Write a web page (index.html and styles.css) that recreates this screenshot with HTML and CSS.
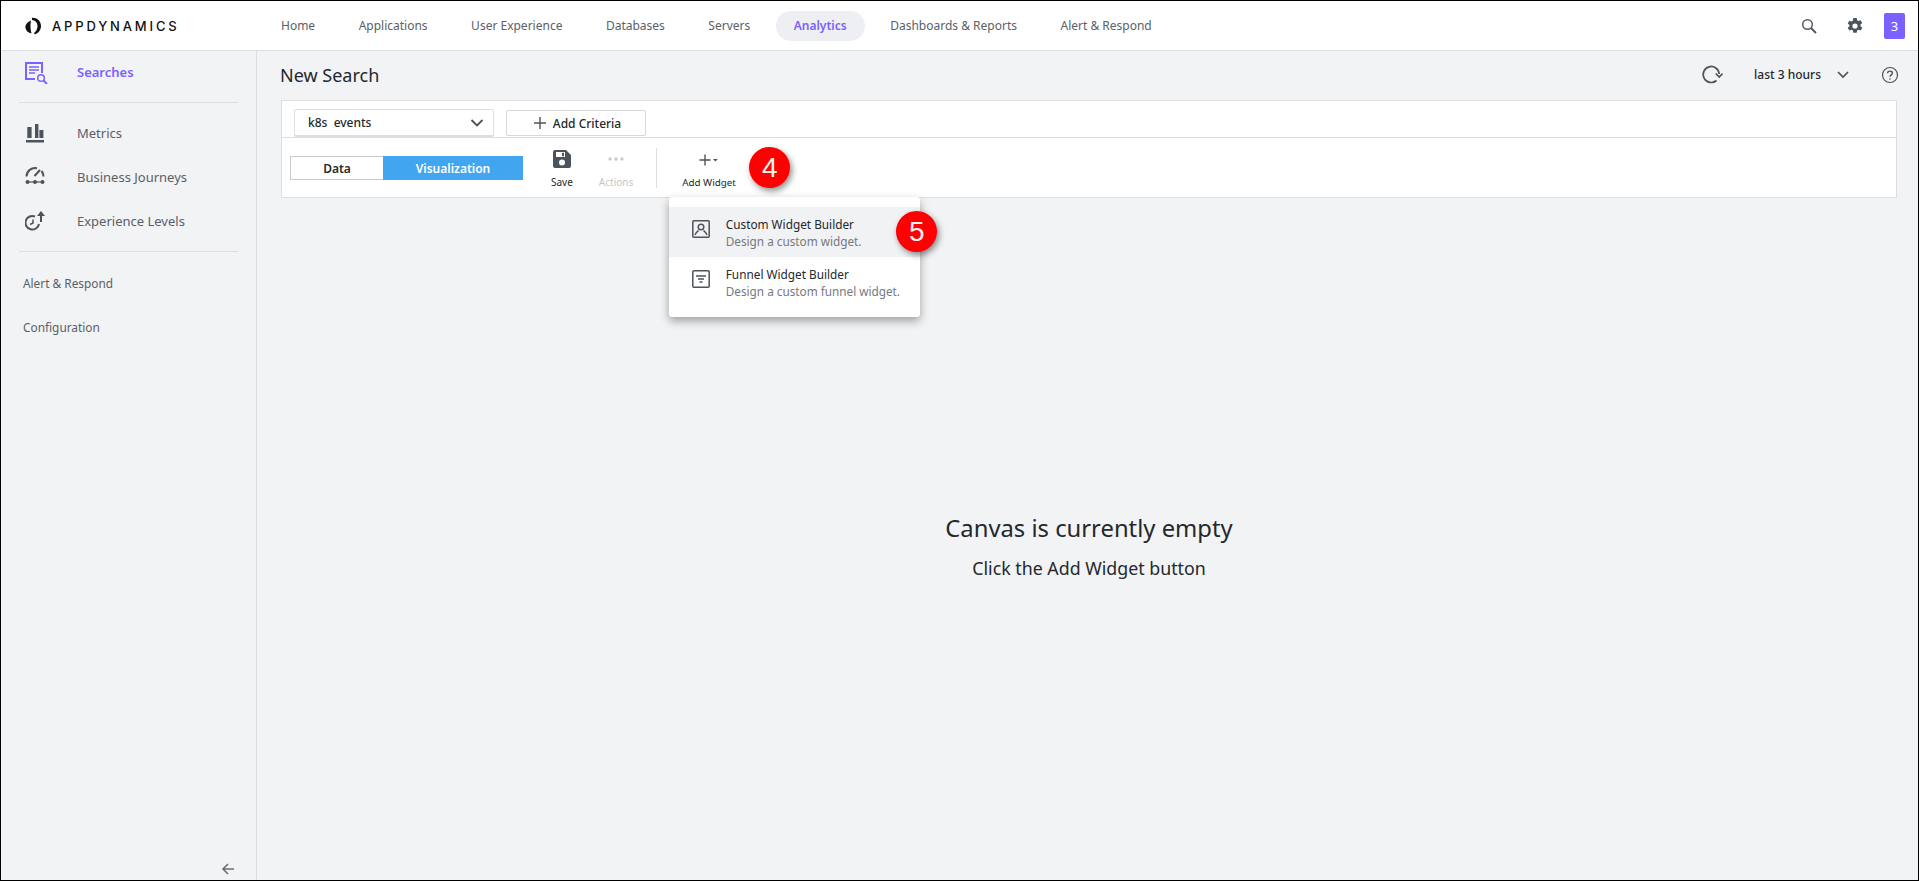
FILE: index.html
```html
<!DOCTYPE html>
<html lang="en">
<head>
    <meta charset="UTF-8">
    <title>New Search</title>
    <link rel="stylesheet" href="styles.css">
</head>
<body>
<div class="frame">
    <header class="topbar">
        <div class="logo">
            <svg width="16" height="18" viewBox="0 0 16 18" fill="#111"><path d="M6 3.500C2 5 0 8 .5 11c.5 3 3 5 6 5.500C5.500 13 5 8 6 3.500z"/><path d="M7 .8c5-.3 9 3.200 9 8.200 0 4-2.500 7-6 8.500L9 16c2.500-2 3.500-4.500 3.500-7 0-3-2-5.500-5.500-6z"/></svg>
            <span class="logo-text">APPDYNAMICS</span>
        </div>
        <nav class="nav">
            <a class="nav-item">Home</a>
            <a class="nav-item">Applications</a>
            <a class="nav-item">User Experience</a>
            <a class="nav-item">Databases</a>
            <a class="nav-item">Servers</a>
            <a class="nav-item active">Analytics</a>
            <a class="nav-item">Dashboards &amp; Reports</a>
            <a class="nav-item">Alert &amp; Respond</a>
        </nav>
        <div class="top-icons">
            <svg width="18" height="18" viewBox="0 0 18 18" fill="none" stroke="#555b63" stroke-width="1.500"><circle cx="7.500" cy="7.500" r="4.800"/><path d="M11 11l5 5" stroke-width="2"/></svg>
            <svg width="18" height="18" viewBox="0 0 18 18"><path fill-rule="evenodd" clip-rule="evenodd" d="M7.300 1h3.400l.4 2.300 1.300.7 2.200-.8 1.700 2.900-1.800 1.500v1.600l1.800 1.500-1.700 2.900-2.200-.8-1.300.7-.4 2.300H7.300l-.4-2.300-1.300-.7-2.200.8-1.700-2.900 1.800-1.500V8.100L1.700 6.600l1.700-2.900 2.200.8 1.300-.7zM9 6.400a2.600 2.600 0 1 0 0 5.200 2.600 2.600 0 0 0 0-5.200z" fill="#4d535b"/></svg>
            <span class="count">3</span>
        </div>
    </header>
    <div class="body">
        <aside class="sidebar">
            <div class="side-top">
                <a class="side-item selected">
                    <svg width="24" height="24" viewBox="0 0 24 24" fill="none" stroke="#7b61ff"><path d="M10 19H1V3h16v10" stroke-width="2"/><path d="M4 7h10M4 10h10M4 13h6" stroke-width="1.500"/><circle cx="16" cy="18" r="3.300" stroke-width="1.500"/><path d="m18.500 20.500 3.500 3.500" stroke-width="2"/></svg>
                    <span>Searches</span>
                </a>
            </div>
            <div class="side-group">
                <a class="side-item">
                    <svg width="24" height="24" viewBox="0 0 24 24" fill="#4d535b"><path d="M2.300 6h4.300v11H2.300zM10 3h3.400v14H10zM14.400 9h4v8h-4zM1 19h18v2.600H1z"/></svg>
                    <span>Metrics</span>
                </a>
                <a class="side-item">
                    <svg width="24" height="24" viewBox="0 0 24 24" fill="none" stroke="#4d535b" stroke-width="2"><path d="M1.500 11.500A8.500 8.500 0 0 1 12 3.300M16.500 6a8.500 8.500 0 0 1 2 5.500"/><path d="m9.500 11 5.500-6"/><g fill="#4d535b" stroke="none"><circle cx="2.500" cy="17" r="2"/><circle cx="10" cy="17" r="2"/><circle cx="17.500" cy="17" r="2"/><path d="M2.500 16.400h15v1.200h-15z"/></g></svg>
                    <span>Business Journeys</span>
                </a>
                <a class="side-item">
                    <svg width="24" height="24" viewBox="0 0 24 24" fill="none" stroke="#4d535b" stroke-width="2"><path d="M10 7.500A6.800 6.800 0 1 0 14 15"/><path d="M8 10.500v3.500l-3 1.500" stroke-width="1.500"/><path d="M16 13V5"/><path d="m12 7 4-5 4 5z" fill="#4d535b" stroke="none"/></svg>
                    <span>Experience Levels</span>
                </a>
            </div>
            <div class="side-links">
                <a class="side-link">Alert &amp; Respond</a>
                <a class="side-link">Configuration</a>
            </div>
            <div class="collapse">
                <svg width="14" height="14" viewBox="0 0 14 14" fill="none" stroke="#6b7178" stroke-width="1.600"><path d="M13 7H2M7 2 2 7l5 5"/></svg>
            </div>
        </aside>
        <main class="main">
            <div class="title-row">
                <h1 class="page-title">New Search</h1>
                <div class="time-tools">
                    <svg width="22" height="22" viewBox="0 0 22 22" fill="none" stroke="#4d535b" stroke-width="1.700"><path d="M15.500 16.500A8 8 0 1 1 18.200 10"/><path d="m14.800 9.500 3.400 3.600 3.400-3.600"/></svg>
                    <span class="time-label">last 3 hours</span>
                    <svg width="14" height="14" viewBox="0 0 14 14" fill="none" stroke="#4d535b" stroke-width="1.700"><path d="m2 4 5 5 5-5"/></svg>
                    <svg class="help" width="18" height="18" viewBox="0 0 18 18" fill="none" stroke="#4d535b" stroke-width="1.200"><circle cx="9" cy="9" r="7.500"/><path d="M6.600 7.200C6.700 4.400 11.400 4.500 11.400 7c0 1.800-2.400 1.900-2.400 3.800" stroke-width="1.400"/><circle cx="9" cy="13" r=".8" fill="#4d535b" stroke="none"/></svg>
                </div>
            </div>
            <section class="panel">
                <div class="panel-top">
                    <div class="select">
                        <span>k8s&nbsp; events</span>
                        <svg width="14" height="14" viewBox="0 0 14 14" fill="none" stroke="#4d535b" stroke-width="1.800"><path d="m1.500 4 5.500 5.500L12.500 4"/></svg>
                    </div>
                    <button class="criteria">
                        <svg width="12" height="12" viewBox="0 0 12 12" stroke="#4d535b" stroke-width="1.400"><path d="M6 0v12M0 6h12"/></svg>
                        Add Criteria
                    </button>
                </div>
                <div class="panel-tools">
                    <div class="toggle">
                        <span class="toggle-data">Data</span>
                        <span class="toggle-vis">Visualization</span>
                    </div>
                    <div class="tool save">
                        <svg width="18" height="18" viewBox="0 0 18 18"><path fill-rule="evenodd" clip-rule="evenodd" d="M2 0h11l5 5v11a2 2 0 0 1-2 2H2a2 2 0 0 1-2-2V2a2 2 0 0 1 2-2zm1 2v5h9V2zm6 .800h2v3.400H9zM9 9.500a3 3 0 1 0 0 6 3 3 0 0 0 0-6z" fill="#4d535b"/></svg>
                        <span>Save</span>
                    </div>
                    <div class="tool actions">
                        <svg width="18" height="18" viewBox="0 0 18 18" fill="#c8cacd"><circle cx="3" cy="9" r="1.700"/><circle cx="9" cy="9" r="1.700"/><circle cx="15" cy="9" r="1.700"/></svg>
                        <span>Actions</span>
                    </div>
                    <div class="tool-sep"></div>
                    <div class="tool widget">
                        <svg width="20" height="18" viewBox="0 0 20 18"><path d="M6 3.500v11M.5 9h11" stroke="#4d535b" stroke-width="1.400"/><path d="m14 8 2.400 2.400L18.800 8z" fill="#4d535b"/></svg>
                        <span>Add Widget</span>
                        <b class="marker marker-4">4</b>
                        <div class="menu">
                            <div class="menu-item hover">
                                <svg class="menu-icon" width="18" height="18" viewBox="0 0 18 18" fill="none" stroke="#4d535b" stroke-width="1.500"><rect x=".8" y=".8" width="16.400" height="16.400" rx="1"/><circle cx="9" cy="7" r="2.800"/><path d="M3 15c1-3 3-4 3.500-4.500M15 15c-1-3-3-4-3.500-4.500"/></svg>
                                <div class="menu-text">
                                    <div class="menu-title">Custom Widget Builder</div>
                                    <div class="menu-desc">Design a custom widget.</div>
                                </div>
                                <b class="marker marker-5">5</b>
                            </div>
                            <div class="menu-item">
                                <svg class="menu-icon" width="18" height="18" viewBox="0 0 18 18" fill="none" stroke="#4d535b" stroke-width="1.500"><rect x=".8" y=".8" width="16.400" height="16.400" rx="1"/><path d="M4 6h10M6 9h6M7.500 12h3"/></svg>
                                <div class="menu-text">
                                    <div class="menu-title">Funnel Widget Builder</div>
                                    <div class="menu-desc">Design a custom funnel widget.</div>
                                </div>
                            </div>
                        </div>
                    </div>
                </div>
            </section>
            <div class="empty">
                <div class="empty-title">Canvas is currently empty</div>
                <div class="empty-sub">Click the Add Widget button</div>
            </div>
        </main>
    </div>
</div>
</body>
</html>
```

FILE: styles.css
```css
* {
    box-sizing: border-box;
}
html, body {
    height: 100%;
}
body {
    margin: 0;
    font-family: "Noto Sans", "Open Sans", sans-serif;
    font-size: 13px;
    color: #24282d;
    overflow: hidden;
}
svg {
    display: block;
    flex: none;
}
.frame {
    height: 881px;
    border: 1px solid #000;
    display: flex;
    flex-direction: column;
    background-color: #f2f3f5;
}
.topbar {
    height: 49px;
    flex: none;
    display: flex;
    align-items: center;
    background-color: #fff;
}
.logo {
    width: 262px;
    flex: none;
    display: flex;
    align-items: center;
    gap: 11px;
    padding-left: 24px;
}
.logo-text {
    font-family: "Inter", "Liberation Sans", sans-serif;
    font-size: 13px;
    font-weight: 500;
    letter-spacing: 2.850px;
    color: #111;
}
.nav {
    display: flex;
    align-items: center;
}
.nav-item {
    height: 30px;
    line-height: 30px;
    padding: 0 18px;
    margin-right: 7.500px;
    border-radius: 15px;
    font-size: 12px;
    color: #5a6068;
}
.active {
    background-color: #eeeff2;
    color: #7b61ff;
    font-weight: 600;
}
.top-icons {
    margin-left: auto;
    display: flex;
    align-items: center;
    gap: 28px;
    padding-right: 13px;
}
.count {
    width: 21px;
    height: 26px;
    line-height: 26px;
    text-align: center;
    background-color: #7b61ff;
    border-radius: 2px;
    color: #fff;
    margin-left: -8px;
}
.body {
    flex: 1;
    display: flex;
    min-height: 0;
    border-top: 1px solid #dcdee1;
}
.sidebar {
    width: 256px;
    flex: none;
    display: flex;
    flex-direction: column;
    border-right: 1px solid #dcdee1;
    padding: 0 18px;
}
.side-top {
    height: 52px;
    border-bottom: 1px solid #dcdee1;
    display: flex;
}
.side-item {
    display: flex;
    align-items: center;
    gap: 28px;
    height: 44px;
    padding-left: 6px;
    color: #5a6068;
}
.side-top .side-item {
    height: 42px;
}
.selected {
    color: #7b61ff;
    font-weight: 600;
}
.side-group {
    padding: 8px 0 8px;
    border-bottom: 1px solid #dcdee1;
}
.side-links {
    padding-top: 9px;
}
.side-link {
    display: block;
    height: 44px;
    line-height: 44px;
    font-size: 11.850px;
    padding-left: 4px;
    color: #5a6068;
}
.collapse {
    margin-top: auto;
    padding: 0 0 4px 202px;
}
.main {
    flex: 1;
    min-width: 0;
    display: flex;
    flex-direction: column;
    padding: 0 21px 0 24px;
}
.title-row {
    height: 49px;
    flex: none;
    display: flex;
    align-items: center;
    justify-content: space-between;
    padding-bottom: 2px;
}
.page-title {
    margin: 0 0 0 -1px;
    font-size: 18px;
    font-weight: 400;
    color: #24282d;
}
.time-tools {
    display: flex;
    align-items: center;
    margin-right: -2px;
}
.time-label {
    margin: 0 15px 0 31px;
    font-size: 12px;
    font-weight: 500;
}
.help {
    margin-left: 31px;
}
.panel {
    flex: none;
    height: 98px;
    background-color: #fff;
    border: 1px solid #dcdee1;
}
.panel-top {
    height: 37px;
    display: flex;
    gap: 12px;
    padding: 8px 0 0 12px;
    border-bottom: 1px solid #dcdee1;
}
.select {
    width: 200px;
    height: 28px;
    display: flex;
    align-items: center;
    justify-content: space-between;
    padding: 0 9px 0 13px;
    background-color: #fff;
    border: 1px solid #dcdee1;
    border-bottom-width: 2px;
    border-radius: 2px;
    font-size: 12px;
    font-weight: 500;
    position: relative;
}
.criteria {
    width: 140px;
    height: 26px;
    margin-top: 1px;
    display: flex;
    align-items: center;
    justify-content: center;
    gap: 7px;
    padding: 0 0 0 3px;
    background-color: #fff;
    border: 1px solid #d6d8db;
    border-radius: 2px;
    font-family: inherit;
    font-size: 12px;
    font-weight: 500;
    color: #24282d;
    position: relative;
}
.panel-tools {
    height: 59px;
    display: flex;
    align-items: center;
    padding-left: 8px;
}
.toggle {
    display: flex;
    width: 233px;
    height: 24px;
    margin-top: 1px;
    font-size: 12px;
    font-weight: 600;
    line-height: 26px;
    text-align: center;
}
.toggle-data {
    width: 93px;
    line-height: 24px;
    border: 1px solid #c8cacd;
    border-right: 0;
}
.toggle-vis {
    flex: 1;
    background-color: #42a5f0;
    color: #fff;
}
.tool {
    display: flex;
    flex-direction: column;
    align-items: center;
    padding-top: 4px;
    font-size: 10px;
    gap: 7px;
    position: relative;
}
.save {
    margin-left: 28px;
}
.actions {
    margin-left: 26px;
    color: #c4c6c9;
}
.widget {
    font-size: 9.800px;
}
.tool-sep {
    width: 1px;
    height: 40px;
    margin: 0 25px 0 23px;
    background-color: #dcdee1;
}
.marker {
    position: absolute;
    width: 41px;
    height: 41px;
    border-radius: 50%;
    background-color: #f00;
    color: #f3f3f3;
    font-family: "Liberation Sans", sans-serif;
    font-size: 28px;
    font-weight: 400;
    line-height: 41px;
    text-align: center;
    box-shadow: 2px 3px 6px rgba(0, 0, 0, 0.45);
}
.marker-4 {
    left: 67px;
    top: 0;
}
.marker-5 {
    right: -17px;
    top: 4px;
}
.menu {
    position: absolute;
    left: -13px;
    top: 50px;
    width: 251px;
    height: 120px;
    padding: 10px 0;
    background-color: #fff;
    border-radius: 3px;
    box-shadow: 0 4px 10px rgba(0, 0, 0, 0.35);
    z-index: 2;
}
.menu-item {
    position: relative;
    height: 50px;
    display: flex;
    align-items: center;
    gap: 15.500px;
    padding: 0 23px;
    white-space: nowrap;
}
.menu-icon {
    margin-bottom: 5px;
}
.hover {
    background-color: #f1f2f4;
}
.menu-text {
    margin-top: 2px;
}
.menu-title {
    font-size: 11.800px;
    line-height: 18px;
}
.menu-desc {
    font-size: 11.750px;
    line-height: 17px;
    color: #75797f;
}
.empty {
    flex: 1;
    display: flex;
    flex-direction: column;
    align-items: center;
    padding-top: 314px;
}
.empty-title {
    font-size: 23.800px;
    line-height: 32px;
}
.empty-sub {
    font-size: 17.800px;
    line-height: 24px;
    margin-top: 12px;
}
```
